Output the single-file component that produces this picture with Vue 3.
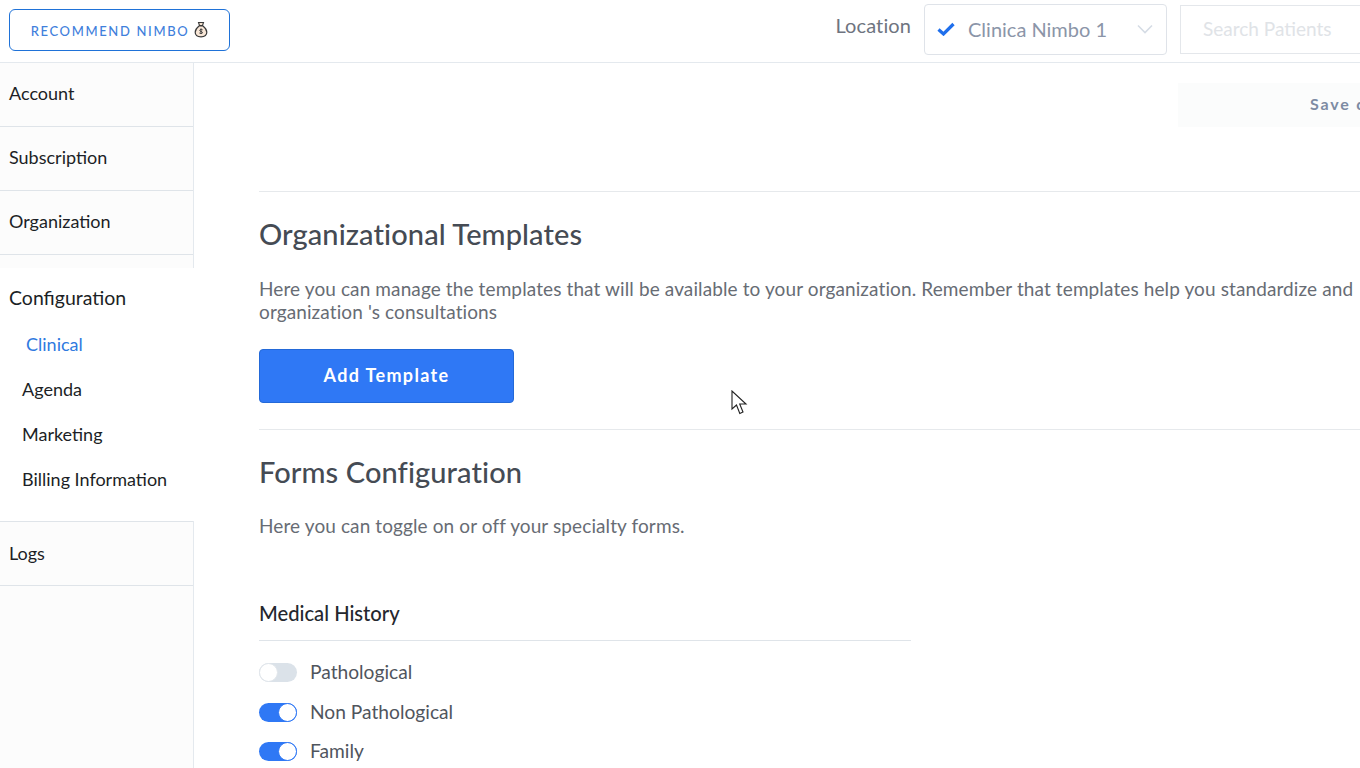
<script setup>
const topNav = ['Account', 'Subscription', 'Organization']
const subNav = [
  { label: 'Clinical', active: true },
  { label: 'Agenda' },
  { label: 'Marketing' },
  { label: 'Billing Information' }
]
const toggles = [
  { label: 'Pathological', on: false },
  { label: 'Non Pathological', on: true },
  { label: 'Family', on: true }
]
</script>

<template>
  <div class="page">
    <header class="topbar">
      <button class="recommend">
        <span class="rec-text">RECOMMEND NIMBO</span>
        <svg width="14" height="17" viewBox="0 0 14 17" class="bag">
          <path d="M4.500 1.500h5L8.500 4.500h-3z" fill="#f6e3d0" stroke="#3a3a3a" stroke-width="1.100" />
          <path d="M5 5C2.500 7 1.200 9 1.200 11.300C1.200 14.500 3.800 15.800 7 15.800S12.800 14.500 12.800 11.300C12.800 9 11.500 7 9 5z" fill="#f8e6d6" stroke="#3a3a3a" stroke-width="1.200" />
          <path d="M7 7.500v5.500M8.600 8.800C7.500 8 5.600 8.300 5.800 9.600C6 10.800 8.400 10.300 8.500 11.600C8.500 12.700 6.400 12.800 5.400 12" fill="none" stroke="#3a3a3a" stroke-width="1" />
        </svg>
      </button>
      <div class="top-right">
        <span class="loc-label">Location</span>
        <div class="loc-select">
          <svg width="18" height="14" viewBox="0 0 18 14" class="check">
            <path d="M1.500 7.500L6.500 12L16.500 2" fill="none" stroke="#1f6fec" stroke-width="3.200" />
          </svg>
          <span class="loc-value">Clinica Nimbo 1</span>
          <svg width="16" height="10" viewBox="0 0 16 10" class="chev">
            <path d="M1 1.500L8 8.500L15 1.500" fill="none" stroke="#d5dce5" stroke-width="1.600" />
          </svg>
        </div>
        <div class="search">Search Patients</div>
      </div>
    </header>

    <div class="body">
      <aside class="sidebar">
        <a v-for="item in topNav" :key="item" class="nav-item">{{ item }}</a>
        <div class="nav-gap"></div>
        <div class="nav-group">
          <div class="group-title">Configuration</div>
          <a
            v-for="s in subNav"
            :key="s.label"
            class="sub-item"
            :class="{ active: s.active }"
          >{{ s.label }}</a>
        </div>
        <a class="nav-item logs">Logs</a>
      </aside>

      <main class="main">
        <div class="save-row">
          <div class="save-btn">Save changes</div>
        </div>

        <section class="section first">
          <h2>Organizational Templates</h2>
          <p class="desc">Here you can manage the templates that will be available to your organization. Remember that templates help you standardize and<br />organization 's consultations</p>
          <button class="add">Add Template</button>
        </section>

        <section class="section second">
          <h2>Forms Configuration</h2>
          <p class="desc short">Here you can toggle on or off your specialty forms.</p>
          <div class="forms">
            <h3>Medical History</h3>
            <div class="toggle-list">
              <div v-for="t in toggles" :key="t.label" class="toggle-row">
                <span class="toggle" :class="{ on: t.on }"><span class="knob"></span></span>
                <span class="toggle-label">{{ t.label }}</span>
              </div>
            </div>
          </div>
        </section>

        <svg class="cursor" width="18" height="26" viewBox="0 0 18 26">
          <path d="M1 1V19L5.500 15L8.800 23.500L12 22L8.700 14H15z" fill="#fff" stroke="#222" stroke-width="1.100" stroke-linejoin="miter" />
        </svg>
      </main>
    </div>
  </div>
</template>

<style>
html, body { margin: 0; background: #fff; overflow: hidden; }
</style>

<style scoped>
.page {
  width: 1360px;
  height: 768px;
  overflow: hidden;
  font-family: Lato, "Open Sans", sans-serif;
  background: #fff;
  color: #4a4f57;
}
.topbar {
  height: 62px;
  border-bottom: 1px solid #e4e9ee;
  display: flex;
  align-items: center;
  justify-content: space-between;
  padding-left: 9px;
}
.recommend {
  width: 221px;
  height: 42px;
  margin-top: -3px;
  border: 1px solid #1f72d8;
  border-radius: 6px;
  background: #fff;
  display: flex;
  align-items: center;
  justify-content: center;
  gap: 5px;
  color: #3f80dc;
  font: 500 13px Lato, sans-serif;
  letter-spacing: 1.650px;
  padding: 0;
}
.rec-text { padding-top: 2px; }
.top-right {
  display: flex;
  align-items: center;
  margin-right: -84px;
  margin-top: -4px;
}
.loc-label {
  color: #6e7480;
  font-size: 20px;
  letter-spacing: 0.100px;
  margin-right: 13px;
  margin-top: -9px;
}
.loc-select {
  width: 243px;
  height: 51px;
  box-sizing: border-box;
  border: 1px solid #dfe3e9;
  border-radius: 4px;
  display: flex;
  align-items: center;
  padding: 0 13px 0 12px;
  margin-right: 13px;
}
.check { flex: none; }
.loc-value {
  color: #8b95a8;
  font-size: 20px;
  margin-left: 13px;
  flex: 1;
}
.search {
  width: 240px;
  height: 45px;
  border: 1px solid #e4e7eb;
  display: flex;
  align-items: center;
  padding-left: 22px;
  padding-bottom: 2px;
  color: #e0e3e7;
  font-size: 19px;
}
.body {
  display: flex;
  height: 705px;
}
.sidebar {
  width: 193px;
  flex: none;
  border-right: 1px solid #e4e9ee;
  background: #fcfcfc;
  display: flex;
  flex-direction: column;
}
.nav-item {
  height: 59px;
  border-bottom: 1px solid #dfe4e9;
  padding-left: 9px;
  display: flex;
  align-items: center;
  color: #1c1f26;
  font-size: 18px;
  padding-bottom: 4px;
}
.nav-gap { height: 13px; }
.nav-group {
  background: #fff;
  margin-right: -1px;
  height: 253px;
  box-sizing: border-box;
  padding: 18px 0 0 9px;
}
.group-title {
  color: #1c1f26;
  font-size: 19.500px;
  line-height: 24px;
  margin-bottom: 12px;
}
.sub-item {
  display: block;
  height: 45px;
  line-height: 45px;
  padding-left: 13px;
  color: #1c1f26;
  font-size: 18px;
}
.sub-item.active {
  color: #2f7ae0;
  padding-left: 17px;
}
.logs {
  border-top: 1px solid #dfe4e9;
  height: 61px;
  padding-bottom: 2px;
}
.main {
  position: relative;
  flex: 1;
  min-width: 0;
  background: #fff;
  padding-left: 65px;
  overflow: hidden;
}
.save-row {
  height: 128px;
  display: flex;
  padding-top: 20px;
  box-sizing: border-box;
}
.save-btn {
  margin-left: 919px;
  width: 300px;
  height: 44px;
  flex: none;
  padding-left: 132px;
  box-sizing: border-box;
  background: #fbfcfc;
  color: #7d8ba3;
  font-weight: 700;
  font-size: 16px;
  letter-spacing: 1.800px;
  line-height: 41px;
}
.section {
  width: 1180px;
  border-top: 1px solid #e6e9ec;
  box-sizing: border-box;
}
.first { height: 238px; padding-top: 23px; }
.second { padding-top: 23px; }
h2 {
  margin: 0;
  font-size: 29px;
  line-height: 38px;
  letter-spacing: 0.100px;
  font-weight: 500;
  color: #454b54;
}
.desc {
  margin: 24px 0 0;
  width: 1110px;
  white-space: nowrap;
  font-size: 19px;
  line-height: 23px;
  letter-spacing: 0.110px;
  color: #676c74;
}
.desc.short { margin-top: 23px; }
.add {
  display: block;
  width: 255px;
  height: 54px;
  margin-top: 26px;
  padding: 0 0 2px;
  background: #2f78f5;
  border: 1px solid #2369d8;
  border-radius: 4px;
  color: #fff;
  font: 700 18px Lato, sans-serif;
  letter-spacing: 1.350px;
}
.forms {
  width: 652px;
  margin-top: 63px;
}
h3 {
  margin: 0;
  padding-bottom: 14px;
  border-bottom: 1px solid #dfe4e9;
  font-size: 20.200px;
  line-height: 26px;
  font-weight: 500;
  color: #24272e;
}
.toggle-list {
  display: flex;
  flex-direction: column;
  gap: 16.500px;
  margin-top: 20px;
}
.toggle-row {
  display: flex;
  align-items: center;
  height: 23px;
  gap: 13px;
}
.toggle {
  width: 38px;
  height: 19px;
  border-radius: 10px;
  background: #dbe2e9;
  position: relative;
  flex: none;
}
.knob {
  position: absolute;
  left: 0;
  top: 0;
  width: 19px;
  height: 19px;
  box-sizing: border-box;
  border-radius: 50%;
  background: #fff;
  border: 1px solid #e1e6eb;
}
.toggle.on { background: #2f78f5; }
.toggle.on .knob {
  left: 19px;
  border-color: #2f78f5;
}
.toggle-label {
  font-size: 19.200px;
  color: #50555d;
  margin-top: -2px;
}
.cursor {
  position: absolute;
  left: 537px;
  top: 327px;
}
</style>
